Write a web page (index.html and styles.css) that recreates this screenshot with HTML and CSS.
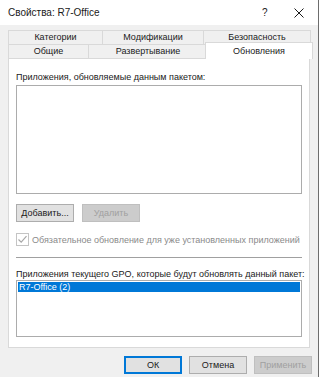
FILE: index.html
```html
<!DOCTYPE html>
<html lang="ru">
<head>
  <meta charset="UTF-8">
  <title>Свойства: R7-Office</title>
  <link rel="stylesheet" href="styles.css">
</head>
<body>
  <div class="dialog">
    <!-- заголовок окна -->
    <div class="titlebar">
      <span class="title">Свойства: R7-Office</span>
      <span class="help">?</span>
      <span class="close">
        <svg width="10" height="10" viewBox="0 0 10 10"><path d="M0.5 0.5 L9.5 9.5 M9.5 0.5 L0.5 9.5" stroke="#1a1a1a" stroke-width="1" fill="none"/></svg>
      </span>
    </div>

    <!-- вкладки -->
    <div class="tabs">
      <div class="tab-row">
        <div class="tab t-cat">Категории</div>
        <div class="tab t-mod">Модификации</div>
        <div class="tab t-sec">Безопасность</div>
      </div>
      <div class="tab-row">
        <div class="tab t-gen">Общие</div>
        <div class="tab t-dep">Развертывание</div>
        <div class="tab t-upd active">Обновления</div>
      </div>
    </div>

    <div class="panel">
      <div class="label">Приложения, обновляемые данным пакетом:</div>
      <div class="listbox list-top"></div>

      <div class="btn-row">
        <button class="btn">Добавить...</button>
        <button class="btn" disabled>Удалить</button>
      </div>

      <label class="check">
        <span class="box">
          <svg width="11" height="11" viewBox="0 0 11 11"><path d="M1.5 5.5 L4.2 8.2 L9.5 2.2" stroke="#a8a8a8" stroke-width="1.2" fill="none"/></svg>
        </span>
        Обязательное обновление для уже установленных приложений
      </label>

      <div class="separator"></div>

      <div class="label">Приложения текущего GPO, которые будут обновлять данный пакет:</div>
      <div class="listbox list-bottom">
        <div class="item selected">R7-Office (2)</div>
      </div>
    </div>

    <div class="footer">
      <button class="btn default">ОК</button>
      <button class="btn">Отмена</button>
      <button class="btn" disabled>Применить</button>
    </div>
  </div>
</body>
</html>
```

FILE: styles.css
```css
body {
  margin: 0;
  padding: 0;
  background: #f0f0f0;
  font-family: "Liberation Sans", Arial, sans-serif;
  font-size: 9px;
  color: #1a1a1a;
}

.dialog {
  width: 319px;
  height: 377px;
  display: flex;
  flex-direction: column;
  border-right: 1px solid #6d6d6d;
  box-sizing: border-box;
}

/* === ЗАГОЛОВОК === */
.titlebar {
  height: 25px;
  background: #fff;
  display: flex;
  align-items: center;
  padding-left: 8px;
  font-size: 10px;
}

.title {
  flex: 1;
}

.help {
  width: 10px;
  margin-right: 22px;
  font-size: 10px;
}

.close {
  width: 10px;
  margin-right: 14px;
  display: flex;
}

/* === ВКЛАДКИ === */
.tabs {
  margin: 5px 8px 0 8px;
  display: flex;
  flex-direction: column;
}

.tab-row {
  display: flex;
  height: 14px;
}

.tab {
  box-sizing: border-box;
  border: 1px solid #d9d9d9;
  border-bottom: none;
  background: #f0f0f0;
  text-align: center;
  line-height: 13px;
  margin-right: -1px;
}

.t-cat { width: 95px; }
.t-mod { width: 102px; }
.t-sec { width: 108px; }
.t-gen { width: 81px; }
.t-dep { width: 120px; }

.t-upd {
  width: 104px;
}

.tab.active {
  background: #fff;
  height: 17px;
  width: 108px;
  margin: -2px -3px -1px -2px;
  line-height: 16px;
  position: relative;
  z-index: 1;
}

/* === ПАНЕЛЬ === */
.panel {
  margin: 0 8px;
  height: 290px;
  box-sizing: border-box;
  background: #fff;
  border: 1px solid #d9d9d9;
  padding: 11px 7px 0 7px;
  display: flex;
  flex-direction: column;
}

.label {
  height: 15px;
  line-height: 14px;
  white-space: nowrap;
}

.listbox {
  border: 1px solid #acacac;
  background: #fff;
  margin-top: 0;
  box-sizing: border-box;
  padding: 1px;
}

.list-top {
  height: 109px;
}

.list-bottom {
  height: 57px;
  margin-top: -2px;
}

.item {
  height: 10px;
  line-height: 10px;
  padding-left: 1px;
}

.item.selected {
  background: #0078d7;
  color: #fff;
}

.btn-row {
  display: flex;
  gap: 8px;
  margin-top: 10px;
}

.btn {
  font-family: inherit;
  font-size: 9px;
  width: 58px;
  height: 18px;
  padding: 0;
  background: #e1e1e1;
  border: 1px solid #adadad;
  color: #1a1a1a;
}

.btn:disabled {
  background: #cccccc;
  border-color: #bfbfbf;
  color: #a0a0a0;
}

.btn.default {
  border: 2px solid #0078d7;
}

.check {
  display: flex;
  align-items: center;
  gap: 3px;
  margin-top: 11px;
  color: #8a8a8a;
  white-space: nowrap;
}

.box {
  width: 13px;
  height: 13px;
  box-sizing: border-box;
  border: 1px solid #c4c4c4;
  display: flex;
  align-items: center;
  justify-content: center;
}

.separator {
  border-top: 1px solid #a0a0a0;
  margin-top: 11px;
  margin-bottom: 9px;
}

/* === НИЖНИЕ КНОПКИ === */
.footer {
  display: flex;
  justify-content: flex-end;
  gap: 7px;
  padding: 8px 6px 0 0;
}
```
